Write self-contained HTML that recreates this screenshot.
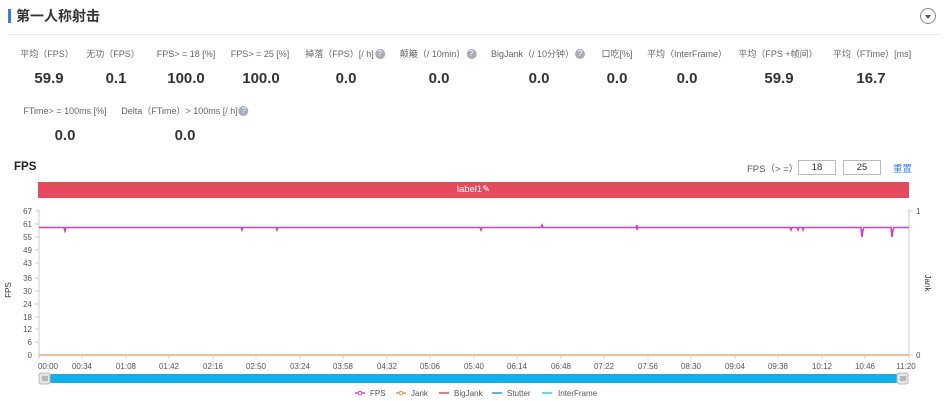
<!DOCTYPE html>
<html><head><meta charset="utf-8"><style>
*{margin:0;padding:0;box-sizing:border-box}
body{width:945px;height:401px;background:#fff;position:relative;overflow:hidden;font-family:"Liberation Sans","Noto Sans CJK SC",sans-serif;color:#333}
.a{position:absolute;white-space:nowrap}
.l{font-size:9px;color:#666;transform:translateX(-50%);line-height:12px;height:12px}
.v{font-size:15px;font-weight:bold;color:#333;transform:translateX(-50%);line-height:18px}
.q{display:inline-block;width:10px;height:10px;border-radius:50%;background:#a8adb8;color:#fff;font-size:8px;line-height:10px;text-align:center;vertical-align:top;margin-top:1px;margin-left:1px;font-family:"Liberation Sans",sans-serif}
</style></head><body>
<div class="a" style="left:8px;top:9px;width:3px;height:14px;background:#3a7cf5"></div>
<div class="a" style="left:16px;top:7px;font-size:14px;font-weight:bold;color:#333;line-height:18px">第一人称射击</div>
<div class="a" style="left:8px;top:34px;width:932px;height:1px;background:#e6e8ec"></div>
<div class="a" style="left:920px;top:8px;width:16px;height:16px;border:1px solid #888;border-radius:50%"></div>
<div class="a" style="left:925px;top:15px;width:0;height:0;border-left:3px solid transparent;border-right:3px solid transparent;border-top:4px solid #555"></div>

<div class="a l" style="left:47px;top:48px">平均（FPS）</div>
<div class="a l" style="left:113px;top:48px">无功（FPS）</div>
<div class="a l" style="left:186px;top:48px">FPS> = 18 [%]</div>
<div class="a l" style="left:260px;top:48px">FPS> = 25 [%]</div>
<div class="a l" style="left:345px;top:48px">掉落（FPS）[/ h]<span class="q">?</span></div>
<div class="a l" style="left:438px;top:48px">颠簸（/ 10min）<span class="q">?</span></div>
<div class="a l" style="left:538px;top:48px">BigJank（/ 10分钟）<span class="q">?</span></div>
<div class="a l" style="left:617px;top:48px">口吃[%]</div>
<div class="a l" style="left:687px;top:48px">平均（InterFrame）</div>
<div class="a l" style="left:778px;top:48px">平均（FPS +帧间）</div>
<div class="a l" style="left:872px;top:48px">平均（FTime）[ms]</div>

<div class="a v" style="left:49px;top:70px">59.9</div>
<div class="a v" style="left:116px;top:70px">0.1</div>
<div class="a v" style="left:186px;top:70px">100.0</div>
<div class="a v" style="left:261px;top:70px">100.0</div>
<div class="a v" style="left:346px;top:70px">0.0</div>
<div class="a v" style="left:439px;top:70px">0.0</div>
<div class="a v" style="left:539px;top:70px">0.0</div>
<div class="a v" style="left:617px;top:70px">0.0</div>
<div class="a v" style="left:687px;top:70px">0.0</div>
<div class="a v" style="left:779px;top:70px">59.9</div>
<div class="a v" style="left:871px;top:70px">16.7</div>

<div class="a l" style="left:65px;top:105px">FTime> = 100ms [%]</div>
<div class="a l" style="left:185px;top:105px">Delta（FTime）> 100ms [/ h]<span class="q">?</span></div>
<div class="a v" style="left:65px;top:127px">0.0</div>
<div class="a v" style="left:185px;top:127px">0.0</div>

<div class="a" style="left:14px;top:161px;font-size:11.5px;font-weight:bold;color:#222">FPS</div>
<div class="a" style="left:747px;top:161px;font-size:9.5px;color:#555">FPS（> =）</div>
<div class="a" style="left:798px;top:160px;width:38px;height:15px;border:1px solid #bbb;font-size:9.5px;text-align:center;line-height:13px">18</div>
<div class="a" style="left:843px;top:160px;width:38px;height:15px;border:1px solid #bbb;font-size:9.5px;text-align:center;line-height:13px">25</div>
<div class="a" style="left:893px;top:161px;font-size:9.5px;color:#3a7cf5">重置</div>
<div class="a" style="left:38px;top:182px;width:871px;height:16px;background:#e54b5c;color:#fff;font-size:9.5px;text-align:center;line-height:16px">label1✎</div>

<svg class="a" style="left:0;top:0" width="945" height="401" font-family="Liberation Sans, sans-serif" font-size="8" fill="#555">
<line x1="39" y1="209" x2="39" y2="356" stroke="#c8ccd4"/>
<line x1="909" y1="209" x2="909" y2="356" stroke="#c8ccd4"/>
<g text-anchor="end">
<text x="32" y="214">67</text><text x="32" y="227">61</text><text x="32" y="240">55</text><text x="32" y="253">49</text><text x="32" y="266">43</text><text x="32" y="281">36</text><text x="32" y="294">30</text><text x="32" y="307">24</text><text x="32" y="320">18</text><text x="32" y="332">12</text><text x="32" y="345">6</text><text x="32" y="358">0</text>
</g>
<g stroke="#c8ccd4"><line x1="35" y1="211" x2="39" y2="211"/><line x1="35" y1="224" x2="39" y2="224"/><line x1="35" y1="237" x2="39" y2="237"/><line x1="35" y1="250" x2="39" y2="250"/><line x1="35" y1="263" x2="39" y2="263"/><line x1="35" y1="278" x2="39" y2="278"/><line x1="35" y1="291" x2="39" y2="291"/><line x1="35" y1="304" x2="39" y2="304"/><line x1="35" y1="317" x2="39" y2="317"/><line x1="35" y1="329" x2="39" y2="329"/><line x1="35" y1="342" x2="39" y2="342"/><line x1="909" y1="211" x2="913" y2="211"/><line x1="909" y1="355" x2="913" y2="355"/></g>
<text x="916" y="214">1</text><text x="916" y="358">0</text>
<text transform="translate(11,290) rotate(-90)" text-anchor="middle" font-size="8" fill="#333">FPS</text>
<text transform="translate(925,283) rotate(90)" text-anchor="middle" font-size="8" fill="#333">Jank</text>
<line x1="39" y1="355" x2="909" y2="355" stroke="#f5a07a" stroke-width="1.5"/>
<path d="M39 227.5 H64 L65 231 L66 227.5 H241 L242 230 L243 227.5 H276 L277 230 L278 227.5 H480 L481 230 L482 227.5 H541 L542 225 L543 227.5 H636 L637 225 L637 230 L638 227.5 H790 L791 230 L792 227.5 H797 L798 230 L799 227.5 H802 L803 230 L804 227.5 H861 L862 237 L863 230 L864 227.5 H891 L892 237 L893 230 L894 227.5 H909" fill="none" stroke="#d63fb6" stroke-width="1.6"/>
<g stroke="#c8ccd4"><line x1="39" y1="355" x2="39" y2="359"/><line x1="82" y1="355" x2="82" y2="359"/><line x1="126" y1="355" x2="126" y2="359"/><line x1="169" y1="355" x2="169" y2="359"/><line x1="213" y1="355" x2="213" y2="359"/><line x1="256" y1="355" x2="256" y2="359"/><line x1="300" y1="355" x2="300" y2="359"/><line x1="343" y1="355" x2="343" y2="359"/><line x1="387" y1="355" x2="387" y2="359"/><line x1="430" y1="355" x2="430" y2="359"/><line x1="474" y1="355" x2="474" y2="359"/><line x1="517" y1="355" x2="517" y2="359"/><line x1="561" y1="355" x2="561" y2="359"/><line x1="604" y1="355" x2="604" y2="359"/><line x1="648" y1="355" x2="648" y2="359"/><line x1="691" y1="355" x2="691" y2="359"/><line x1="735" y1="355" x2="735" y2="359"/><line x1="778" y1="355" x2="778" y2="359"/><line x1="822" y1="355" x2="822" y2="359"/><line x1="865" y1="355" x2="865" y2="359"/><line x1="909" y1="355" x2="909" y2="359"/></g>
<g text-anchor="middle">
<text x="48" y="369">00:00</text><text x="82" y="369">00:34</text><text x="126" y="369">01:08</text><text x="169" y="369">01:42</text><text x="213" y="369">02:16</text><text x="256" y="369">02:50</text><text x="300" y="369">03:24</text><text x="343" y="369">03:58</text><text x="387" y="369">04:32</text><text x="430" y="369">05:06</text><text x="474" y="369">05:40</text><text x="517" y="369">06:14</text><text x="561" y="369">06:48</text><text x="604" y="369">07:22</text><text x="648" y="369">07:56</text><text x="691" y="369">08:30</text><text x="735" y="369">09:04</text><text x="778" y="369">09:38</text><text x="822" y="369">10:12</text><text x="865" y="369">10:46</text><text x="906" y="369">11:20</text>
</g>
<rect x="44" y="374" width="860" height="9" fill="#12aeea"/>
<rect x="39" y="373" width="11" height="11" rx="2" fill="#e4e4e4" stroke="#bbb"/>
<rect x="897" y="373" width="11" height="11" rx="2" fill="#e4e4e4" stroke="#bbb"/>
<g stroke="#888"><line x1="43" y1="376" x2="43" y2="381"/><line x1="45" y1="376" x2="45" y2="381"/><line x1="47" y1="376" x2="47" y2="381"/><line x1="901" y1="376" x2="901" y2="381"/><line x1="903" y1="376" x2="903" y2="381"/><line x1="905" y1="376" x2="905" y2="381"/></g>
<g font-size="8" fill="#555">
<line x1="355" y1="393" x2="365" y2="393" stroke="#d63fb6" stroke-width="1.5"/><circle cx="360" cy="393" r="1.8" fill="#fff" stroke="#d63fb6"/><text x="370" y="396">FPS</text>
<line x1="396" y1="393" x2="406" y2="393" stroke="#f5894a" stroke-width="1.5"/><circle cx="401" cy="393" r="1.8" fill="#fff" stroke="#f5894a"/><text x="411" y="396">Jank</text>
<line x1="439" y1="393" x2="449" y2="393" stroke="#ee4a55" stroke-width="1.5"/><text x="454" y="396">BigJank</text>
<line x1="492" y1="393" x2="502" y2="393" stroke="#3b8ee8" stroke-width="1.5"/><text x="507" y="396">Stutter</text>
<line x1="542" y1="393" x2="552" y2="393" stroke="#22d3e0" stroke-width="1.5"/><text x="558" y="396">InterFrame</text>
</g>
</svg>
</body></html>
